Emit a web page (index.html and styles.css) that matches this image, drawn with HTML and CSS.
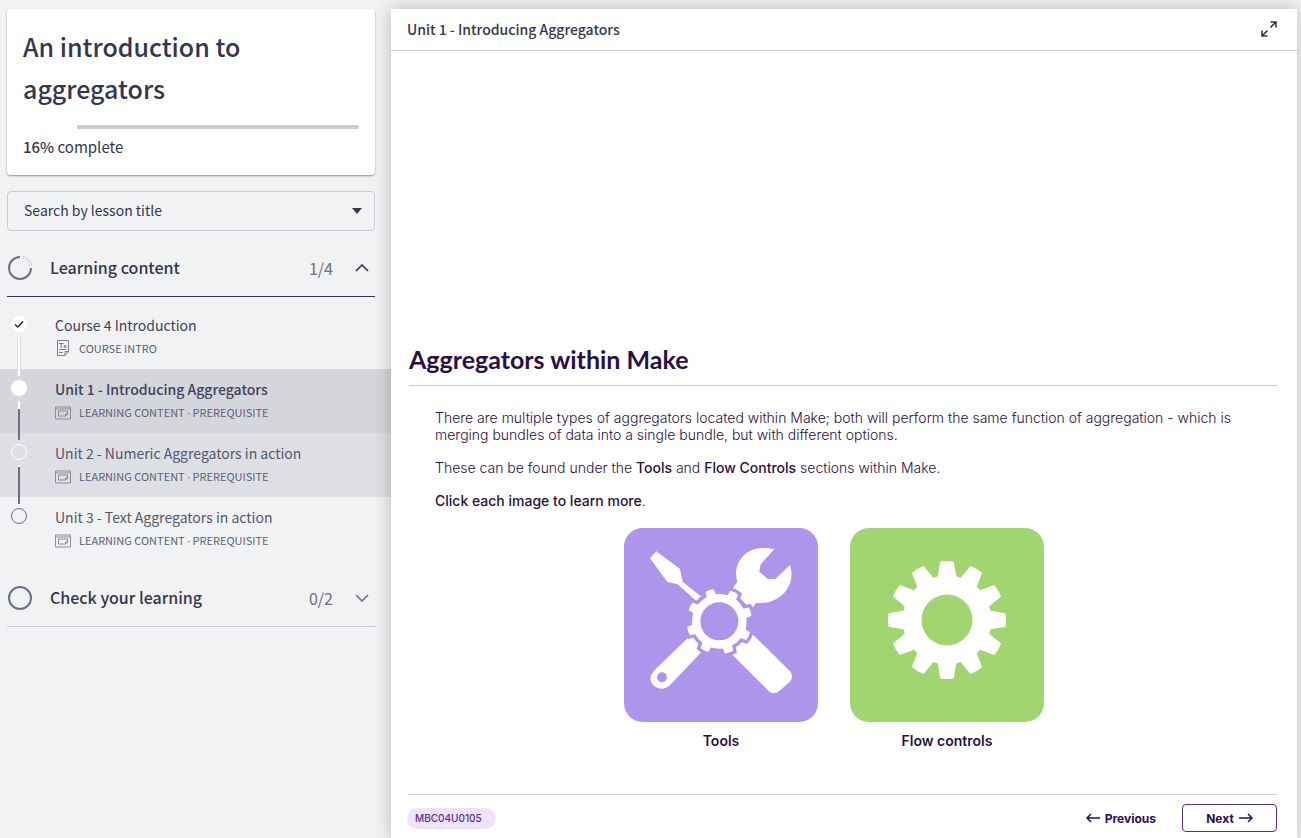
FILE: index.html
```html
<!DOCTYPE html>
<html lang="en">
<head>
<meta charset="utf-8">
<meta name="viewport" content="width=device-width, initial-scale=1">
<title>An introduction to aggregators</title>
<link rel="stylesheet" href="styles.css">
</head>
<body>
<svg class="defs" aria-hidden="true">
  <symbol id="icon-content" viewBox="0 0 16 13">
    <path d="M.5.5h15v12H.5zM.5 2.500h15M10.500 9.500h-7v-5h9v4M12.500 7.500h-2v2z" fill="none" stroke="currentColor"/>
  </symbol>
</svg>
<div class="layout">
  <aside class="sidebar">
    <section class="course">
      <h1 class="course-title">An introduction to aggregators</h1>
      <div class="progress" role="progressbar" aria-label="Course progress" aria-valuenow="16" aria-valuemin="0" aria-valuemax="100"><span class="progress-done" style="width:16%"></span></div>
      <p class="course-status"><strong>16%</strong> complete</p>
    </section>

    <div class="search">
      <select class="search-select" aria-label="Search by lesson title">
        <option>Search by lesson title</option>
      </select>
      <svg class="search-caret" viewBox="0 0 10 6" aria-hidden="true"><path d="M0 0h10L5 6z" fill="currentColor"/></svg>
    </div>

    <section class="group">
      <button class="group-head group-head-open" type="button" aria-expanded="true">
        <svg class="ring" viewBox="0 0 24 24" aria-hidden="true"><circle cx="12" cy="12" r="11" fill="none" stroke="#6d7085" stroke-width="2"/><path d="M12 1a11 11 0 0 1 11 11" fill="none" stroke="#fff" stroke-width="2"/><path d="M15 .7a11.500 11.500 0 0 1 8 8" fill="none" stroke="#b9bbc6" stroke-width=".8"/></svg>
        <span class="group-title">Learning content</span>
        <span class="group-count">1/4</span>
        <svg class="chevron" viewBox="0 0 14 8" aria-hidden="true"><path d="M1 7l6-6 6 6" fill="none" stroke="#343650" stroke-width="1.600"/></svg>
      </button>
      <ol class="lessons">
        <li class="lesson lesson-seen">
          <span class="dot dot-done"><svg viewBox="0 0 16 16" aria-hidden="true"><path d="M4 8.500l2.700 2.500L12 5.500" fill="none" stroke="#25273d" stroke-width="1.500"/></svg></span>
          <a class="lesson-link" href="#intro">
            <span class="lesson-title lesson-title-dark">Course 4 Introduction</span>
            <span class="lesson-meta"><svg class="meta-icon" viewBox="0 0 16 16" aria-hidden="true"><path d="M2.500.5h11v11l-3.500 4H2.500zM13.500 11.500H10v4M4 9.500h7.500M4 12.500h4" fill="none" stroke="#7c7f92"/><path d="M4 3.500h4.500M6.200 3.500V8M9 5l2.500 3M11.500 5L9 8" fill="none" stroke="#8b6f6c"/></svg>COURSE INTRO</span>
          </a>
        </li>
        <li class="lesson lesson-current">
          <span class="dot dot-white"></span>
          <a class="lesson-link" href="#unit-1" aria-current="page">
            <span class="lesson-title">Unit 1 - Introducing Aggregators</span>
            <span class="lesson-meta"><svg class="meta-icon"><use href="#icon-content"/></svg><span>LEARNING CONTENT <span class="sep">·</span> PREREQUISITE</span></span>
          </a>
        </li>
        <li class="lesson lesson-hover">
          <span class="dot dot-outline"></span>
          <a class="lesson-link" href="#unit-2">
            <span class="lesson-title">Unit 2 - Numeric Aggregators in action</span>
            <span class="lesson-meta"><svg class="meta-icon"><use href="#icon-content"/></svg><span>LEARNING CONTENT <span class="sep">·</span> PREREQUISITE</span></span>
          </a>
        </li>
        <li class="lesson">
          <span class="dot"></span>
          <a class="lesson-link" href="#unit-3">
            <span class="lesson-title">Unit 3 - Text Aggregators in action</span>
            <span class="lesson-meta"><svg class="meta-icon"><use href="#icon-content"/></svg><span>LEARNING CONTENT <span class="sep">·</span> PREREQUISITE</span></span>
          </a>
        </li>
      </ol>
    </section>

    <section class="group">
      <button class="group-head" type="button" aria-expanded="false">
        <svg class="ring" viewBox="0 0 24 24" aria-hidden="true"><circle cx="12" cy="12" r="11" fill="none" stroke="#6d7085" stroke-width="2"/></svg>
        <span class="group-title">Check your learning</span>
        <span class="group-count">0/2</span>
        <svg class="chevron" viewBox="0 0 14 8" aria-hidden="true"><path d="M1 1l6 6 6-6" fill="none" stroke="#6d7085" stroke-width="1.600"/></svg>
      </button>
    </section>
  </aside>

  <main class="player">
    <header class="player-head">
      <h2 class="player-title">Unit 1 - Introducing Aggregators</h2>
      <button class="expand" type="button" aria-label="Full screen"><svg viewBox="0 0 16 16" aria-hidden="true"><path d="M9.500 6.500L15 1M9.500 1H15v5.500M6.500 9.500L1 15M1 9.500V15h5.500" fill="none" stroke="currentColor" stroke-width="1.600"/></svg></button>
    </header>

    <article class="slide">
      <h3 class="slide-title">Aggregators within Make</h3>
      <div class="slide-text">
        <p>There are multiple types of aggregators located within Make; both will perform the same function of aggregation - which is merging bundles of data into a single bundle, but with different options.</p>
        <p>These can be found under the <b>Tools</b> and <b>Flow Controls</b> sections within Make.</p>
        <p><b>Click each image to learn more</b>.</p>
      </div>
      <div class="cards">
        <button class="card" type="button">
          <svg class="card-art" viewBox="42 41 582 582" aria-hidden="true">
            <defs>
              <g id="small-gear">
                <circle r="82"/>
                <path id="small-tooth" d="M-15-76l2-21q13-3 26 0l2 21z"/>
                <use href="#small-tooth" transform="rotate(45)"/>
                <use href="#small-tooth" transform="rotate(90)"/>
                <use href="#small-tooth" transform="rotate(135)"/>
                <use href="#small-tooth" transform="rotate(180)"/>
                <use href="#small-tooth" transform="rotate(225)"/>
                <use href="#small-tooth" transform="rotate(270)"/>
                <use href="#small-tooth" transform="rotate(315)"/>
              </g>
            </defs>
            <rect x="42" y="41" width="582" height="582" rx="56" fill="#ac95ea"/>
            <g fill="#fff">
              <path d="M139 111L210 164l8 38 56 45-12 16-59-53-31-7-52-71z"/>
              <path d="M368 222l14-19C365 145 410 84 493 105l-41 45-4 22 26 23 23-2 43-41c20 62-30 120-102 114l-8 12-20-6-20-20-15-16z"/>
              <path d="M240 364L131 470q-20 25 0 44 26 20 50-3l105-110-24-37z"/>
              <path d="M429 361l111 110q12 15 0 31l-32 28q-15 12-30 2L367 421l14-33z"/>
            </g>
            <circle cx="156" cy="489" r="15" fill="#ac95ea"/>
            <use href="#small-gear" transform="translate(328 321) rotate(-17.500)" fill="#ac95ea" stroke="#ac95ea" stroke-width="20"/>
            <use href="#small-gear" transform="translate(328 321) rotate(-17.500)" fill="#fff"/>
            <circle cx="328" cy="321" r="57" fill="#ac95ea"/>
          </svg>
          <span class="card-label">Tools</span>
        </button>
        <button class="card" type="button">
          <svg class="card-art" viewBox="0 0 194 194" aria-hidden="true">
            <rect width="194" height="194" rx="19" fill="#a1d570"/>
            <g transform="translate(97 92)" fill="#fff">
              <circle r="44.500"/>
              <path id="tooth" d="M-9.500-42l2.800-16.500q6.700-1 13.400 0L9.500-42z"/>
              <use href="#tooth" transform="rotate(30)"/>
              <use href="#tooth" transform="rotate(60)"/>
              <use href="#tooth" transform="rotate(90)"/>
              <use href="#tooth" transform="rotate(120)"/>
              <use href="#tooth" transform="rotate(150)"/>
              <use href="#tooth" transform="rotate(180)"/>
              <use href="#tooth" transform="rotate(210)"/>
              <use href="#tooth" transform="rotate(240)"/>
              <use href="#tooth" transform="rotate(270)"/>
              <use href="#tooth" transform="rotate(300)"/>
              <use href="#tooth" transform="rotate(330)"/>
              <circle r="25.500" fill="#a1d570"/>
            </g>
          </svg>
          <span class="card-label">Flow controls</span>
        </button>
      </div>
      <footer class="slide-foot">
        <span class="code">MBC04U0105</span>
        <button class="nav" type="button"><svg class="arrow" viewBox="0 0 14 10" aria-hidden="true"><path d="M14 5H1M5 1L1 5l4 4" fill="none" stroke="currentColor" stroke-width="1.500"/></svg>Previous</button>
        <button class="nav nav-next" type="button">Next<svg class="arrow" viewBox="0 0 14 10" aria-hidden="true"><path d="M0 5h13M9 1l4 4-4 4" fill="none" stroke="currentColor" stroke-width="1.500"/></svg></button>
      </footer>
    </article>
  </main>
</div>
</body>
</html>
```

FILE: styles.css
```css
* { box-sizing: border-box; }

body {
  margin: 0;
  background: #f1f2f4;
  color: #34364e;
  font-family: "Noto Sans CJK SC", "Noto Sans", sans-serif;
  font-size: 14px;
}

h1, h2, h3, p, ol { margin: 0; padding: 0; }
button { margin: 0; padding: 0; border: 0; background: none; color: inherit; font: inherit; cursor: pointer; }
a { color: inherit; text-decoration: none; }
svg { display: block; }

.defs { position: absolute; width: 0; height: 0; }

.layout { display: flex; min-height: 100vh; overflow: hidden; }

/* Sidebar */
.sidebar { flex: 0 0 391px; padding-top: 9px; }

.course {
  margin: 0 16px 16px 7px;
  padding: 16px;
  background: #fff;
  border-radius: 4px;
  box-shadow: 0 1px 2px rgba(0, 0, 0, .4);
}
.course-title { font-size: 25px; line-height: 42px; font-weight: 500; }
.progress { height: 4px; margin: 16px 0 8px; border-radius: 2px; background: #cacbd6; overflow: hidden; }
.progress-done { display: block; height: 4px; min-width: 54px; background: #fff; }
.course-status { padding-bottom: 2px; font-size: 15px; line-height: 20px; }
.course-status strong { font-weight: 500; }

.search { position: relative; margin: 0 16px 9px 7px; }
.search-select {
  display: block;
  width: 100%;
  height: 40px;
  padding: 0 16px 2px;
  border: 1px solid #cacbd6;
  border-radius: 4px;
  background: transparent;
  color: inherit;
  font: inherit;
  appearance: none;
}
.search-caret { position: absolute; top: 17px; right: 13px; width: 10px; height: 6px; pointer-events: none; }

.group-head {
  display: flex;
  align-items: center;
  width: calc(100% - 23px);
  height: 57px;
  margin: 0 16px 0 7px;
  padding-left: 1px;
  border-bottom: 1px solid #cacbd6;
  text-align: left;
}
.group-head-open { border-color: #343650; }
.ring { width: 24px; height: 24px; margin-right: 18px; }
.group-title { flex: 1; padding-bottom: 2px; font-size: 16px; font-weight: 500; }
.group-count { margin-right: 22px; color: #6d7085; font-size: 16px; }
.chevron { width: 14px; height: 8px; margin-right: 6px; }

.lessons { padding: 8px 0 9px; list-style: none; }
.lesson { position: relative; display: flex; height: 64px; padding: 10px 16px 0 11px; color: #54566c; }
.dot { flex: none; width: 16px; height: 16px; margin: 1px 28px 0 0; border: 1px solid #6d7085; border-radius: 50%; }
.dot-done, .dot-white { border: 0; background: #fff; }
.dot-outline { border-color: #fff; }
.lesson:not(:last-child)::after {
  content: "";
  position: absolute;
  z-index: 1;
  top: 32px;
  left: 18px;
  width: 2px;
  height: 39px;
  background: linear-gradient(#fff 2px, #6d7085 2px);
}
.lesson-seen:not(:last-child)::after { background: #fff; box-shadow: -1px 0 #dcdde1, 1px 0 #dcdde1; }
.lesson-current:not(:last-child)::after { background: linear-gradient(#fff 8px, #6d7085 8px); }
.lesson-current { background: #d5d6db; color: #40425a; }
.lesson-hover { background: #dedfe4; }
.lesson-link { display: flex; flex-direction: column; gap: 2px; }
.lesson-title { line-height: 20px; }
.lesson-title-dark { color: #40425a; }
.lesson-current .lesson-title { font-weight: 500; }
.lesson-meta { display: flex; align-items: center; gap: 8px; color: #5d5f74; font-size: 11px; line-height: 22px; }
.meta-icon { width: 16px; height: 16px; color: #8a8c9e; }
.sep { font-family: "Open Sans", sans-serif; }

/* Player */
.player {
  position: relative;
  flex: 1;
  display: flex;
  flex-direction: column;
  min-width: 0;
  margin: 9px 4px 0 0;
  background: #fff;
  box-shadow: 0 0 16px rgba(0, 0, 0, .24);
}
.player-head {
  display: flex;
  align-items: center;
  justify-content: space-between;
  height: 42px;
  padding: 0 20px 2px 16px;
  border-bottom: 1px solid #cacbd6;
}
.player-title { font-size: 14px; font-weight: 500; }
.expand { width: 16px; height: 16px; }

.slide {
  flex: 1;
  display: flex;
  flex-direction: column;
  padding: 0 20px 6px 18px;
  color: #2b0f46;
  font-family: Inter, "Liberation Sans", sans-serif;
}
.slide-title {
  margin-top: auto;
  padding-bottom: 11px;
  border-bottom: 1px solid #c9c9c9;
  font-family: Lato, Inter, sans-serif;
  font-size: 25px;
  line-height: 30px;
  font-weight: 700;
}
.slide-text { display: grid; gap: 16px; padding: 23px 26px 19px; line-height: 17px; font-weight: 300; }
.slide-text b { font-weight: 500; }

.cards { display: flex; justify-content: center; gap: 32px; padding: 0 18px 43px 0; }
.card { width: 194px; }
.card-art { width: 194px; height: 194px; }
.card-label { display: block; margin-top: 9px; font-size: 14px; line-height: 20px; font-weight: 600; }

.slide-foot { display: flex; align-items: center; padding-top: 9px; border-top: 1px solid #cdc8cd; }
.code {
  margin: 0 auto 0 -2px;
  padding: 0 14px 0 8px;
  border-radius: 11px;
  background: #efe3fb;
  color: #5c2d91;
  font-size: 10px;
  line-height: 21px;
  font-weight: 500;
}
.nav { display: flex; align-items: center; gap: 5px; color: #2d0a5c; font-size: 12px; font-weight: 700; }
.nav-next { justify-content: center; width: 95px; height: 28px; margin-left: 26px; border: 1px solid #5c2d91; border-radius: 4px; }
.arrow { width: 14px; height: 10px; }
```
